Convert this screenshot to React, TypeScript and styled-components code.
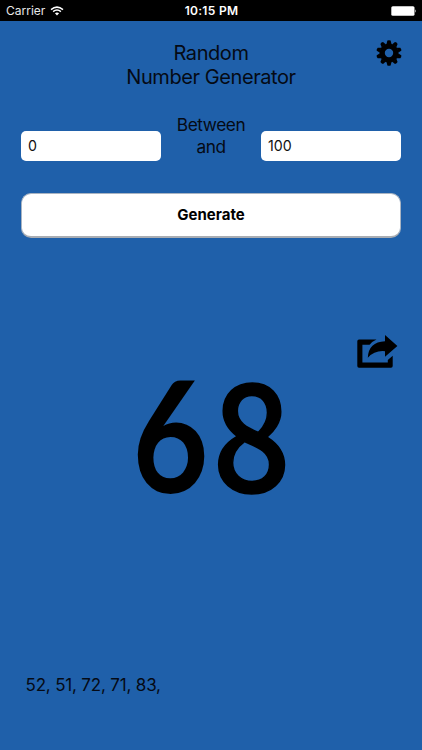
import React from 'react';
import styled, { createGlobalStyle } from 'styled-components';

const Global = createGlobalStyle`
  * { box-sizing: border-box; }
  body { margin: 0; background: #1f60aa; }
`;

const Screen = styled.main`
  width: 422px;
  height: 750px;
  display: flex;
  flex-direction: column;
  overflow: hidden;
  background: #1f60aa;
  color: #050a14;
  font-family: Inter, 'Liberation Sans', sans-serif;
`;

const StatusBar = styled.header`
  flex: none;
  height: 20.5px;
  padding: 1px 5px 0 6px;
  display: grid;
  grid-template-columns: 1fr auto 1fr;
  align-items: center;
  background: #000;
  color: #e8e8e8;
  font-size: 12px;
`;

const Carrier = styled.div`
  display: flex;
  align-items: center;
  gap: 5px;
  letter-spacing: 0;
`;

const Clock = styled.time`
  font-weight: 600;
  color: #fff;
  letter-spacing: 0.3px;
`;

const BatterySlot = styled.div`
  display: flex;
  justify-content: flex-end;
`;

const TitleRow = styled.section`
  height: 88.5px;
  display: grid;
  grid-template-columns: 56px 1fr 56px;
  padding: 21.5px 0 0;
`;

const Title = styled.h1`
  margin: 0;
  grid-column: 2;
  text-align: center;
  font-size: 20px;
  line-height: 23.5px;
  font-weight: 400;
  letter-spacing: -0.42px;
`;

const IconButton = styled.button`
  padding: 0;
  border: 0;
  background: none;
  color: #000;
  display: block;
  line-height: 0;
`;

const SettingsButton = styled(IconButton)`
  align-self: start;
  justify-self: start;
  margin-top: -3px;
  margin-left: 9px;
`;

const RangeRow = styled.section`
  height: 84px;
  padding: 0 21px;
  display: grid;
  grid-template-columns: 140px 1fr 140px;
`;

const Field = styled.input`
  width: 140px;
  height: 30px;
  margin-top: 22px;
  padding: 0 7px 2px;
  border: 0;
  border-radius: 5px;
  background: #fff;
  color: #111;
  font: 400 14.2px Inter, sans-serif;
`;

const RangeLabel = styled.div`
  padding-top: 5px;
  text-align: center;
  font-size: 17.3px;
  line-height: 21.5px;
  letter-spacing: -0.45px;
`;

const GenerateButton = styled.button`
  flex: none;
  height: 44.5px;
  margin: 0 21px;
  border: 1px solid #a9b4c2;
  border-bottom: 2px solid #a9adb3;
  border-radius: 10px;
  background: #fff;
  color: #000;
  font: 700 15px Inter, sans-serif;
`;

const ShareRow = styled.div`
  flex: none;
  height: 132px;
  padding: 96.5px 24px 0 0;
  display: flex;
  justify-content: flex-end;
`;

const Result = styled.output`
  flex: none;
  height: 140px;
  display: flex;
  justify-content: center;
  color: #000;
`;

const Digit = styled.span<{
  $family: string;
  $size: number;
  $weight: number;
  $stretch: number;
  $leading: number;
  $outline: number;
}>`
  width: 81px;
  display: flex;
  justify-content: center;
  font-family: '${(p) => p.$family}', sans-serif;
  font-size: ${(p) => p.$size}px;
  font-weight: ${(p) => p.$weight};
  line-height: ${(p) => p.$leading}px;
  transform: scaleX(${(p) => p.$stretch});
  -webkit-text-stroke: ${(p) => p.$outline}px #000;
`;

const History = styled.footer`
  margin-top: auto;
  padding: 0 26px 54.5px 25.5px;
  font-size: 17px;
  line-height: 22px;
  letter-spacing: -0.18px;
`;

const Wifi = () => (
  <svg width="14" height="10" viewBox="0 0 14 10" fill="none" stroke="#fff" strokeWidth="1.5">
    <path d="M1 3.6 Q7 -1.4 13 3.6" />
    <path d="M3.1 5.7 Q7 2.5 10.9 5.7" />
    <path d="M4.9 7.2 Q7 5.8 9.1 7.2 L7 9.5Z" fill="#fff" stroke="none" />
  </svg>
);

const Battery = () => (
  <svg width="26" height="10" viewBox="0 0 26 10">
    <rect x="0.3" y="0.3" width="23.2" height="9.4" rx="1.5" fill="#fff" />
    <path d="M24.3 3.3 Q25.8 5 24.3 6.7Z" fill="#fff" />
  </svg>
);

const teeth = [0, 36, 72, 108, 144, 180, 216, 252, 288, 324];

const Gear = () => (
  <svg width="28" height="28" viewBox="-14 -14 28 28">
    <circle r="6.9" fill="none" stroke="currentColor" strokeWidth="5.4" />
    {teeth.map((a) => (
      <path key={a} d="M-2.5 -9 L-1.6 -12.4 Q0 -13.3 1.6 -12.4 L2.5 -9Z" fill="currentColor" transform={`rotate(${a})`} />
    ))}
  </svg>
);

const Share = () => (
  <svg width="41" height="34" viewBox="0 0 41 34" fill="currentColor">
    <path d="M19.5 4.6 H2 Q0.3 4.6 0.3 6.3 V31 Q0.3 32.7 2 32.7 H34 Q35.7 32.7 35.7 31 V20.7 L30.8 25 V27.5 H5.4 V9.8 H12.6 Q15.5 6.3 19.5 4.6Z" />
    <path d="M28 0 L40.4 11 L28 21.8 V16.2 Q17.5 15.2 10.8 22.8 Q11.5 7 28 6.3Z" />
  </svg>
);

export default function App() {
  return (
    <Screen>
      <Global />
      <StatusBar>
        <Carrier>Carrier <Wifi /></Carrier>
        <Clock>10:15 PM</Clock>
        <BatterySlot><Battery /></BatterySlot>
      </StatusBar>
      <TitleRow>
        <Title>Random<br />Number Generator</Title>
        <SettingsButton aria-label="Settings"><Gear /></SettingsButton>
      </TitleRow>
      <RangeRow>
        <Field aria-label="Minimum" defaultValue="0" />
        <RangeLabel>Between<br />and</RangeLabel>
        <Field aria-label="Maximum" defaultValue="100" />
      </RangeRow>
      <GenerateButton>Generate</GenerateButton>
      <ShareRow>
        <IconButton aria-label="Share"><Share /></IconButton>
      </ShareRow>
      <Result>
        <Digit $family="Lato" $size={155} $weight={700} $stretch={0.85} $leading={126} $outline={0}>6</Digit>
        <Digit $family="Noto Sans CJK SC" $size={150} $weight={500} $stretch={0.92} $leading={113} $outline={1.5}>8</Digit>
      </Result>
      <History>52, 51, 72, 71, 83,</History>
    </Screen>
  );
}
